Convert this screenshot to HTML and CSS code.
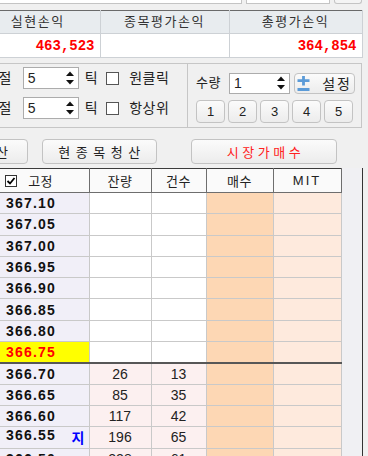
FILE: index.html
```html
<!DOCTYPE html>
<html lang="ko">
<head>
    <meta charset="UTF-8" />
    <title>주문</title>
    <link rel="stylesheet" href="styles.css">
</head>
<body>
    <div class="top-strip">
        <span class="top-box top-box-a"></span>
        <span class="top-box top-box-b"></span>
        <span class="top-box top-btn"></span>
    </div>

    <table class="pl">
        <colgroup><col class="pl-c1"><col class="pl-c2"><col class="pl-c3"></colgroup>
        <tr><th>실현손익</th><th>종목평가손익</th><th>총평가손익</th></tr>
        <tr><td>463,523</td><td></td><td>364,854</td></tr>
    </table>

    <div class="ctrl">
        <div class="ctrl-left">
            <div class="ctrl-row">
                <span class="lbl lbl-cut">익절</span>
                <div class="spin spin-tick">
                    <span>5</span>
                    <svg class="spin-arrows" width="8" height="18" viewBox="0 0 8 18"><polygon points="0,7 4,2.5 8,7" /><polygon points="0,11 8,11 4,15.5" /></svg>
                </div>
                <span class="lbl unit">틱</span>
                <span class="chk"></span>
                <span class="lbl">원클릭</span>
            </div>
            <div class="ctrl-row">
                <span class="lbl lbl-cut">손절</span>
                <div class="spin spin-tick">
                    <span>5</span>
                    <svg class="spin-arrows" width="8" height="18" viewBox="0 0 8 18"><polygon points="0,7 4,2.5 8,7" /><polygon points="0,11 8,11 4,15.5" /></svg>
                </div>
                <span class="lbl unit">틱</span>
                <span class="chk"></span>
                <span class="lbl">항상위</span>
            </div>
        </div>
        <div class="ctrl-right">
            <div class="ctrl-row">
                <span class="lbl lbl-qty">수량</span>
                <div class="spin spin-qty">
                    <span>1</span>
                    <svg class="spin-arrows" width="8" height="18" viewBox="0 0 8 18"><polygon points="0,7 4,2.5 8,7" /><polygon points="0,11 8,11 4,15.5" /></svg>
                </div>
                <button class="btn btn-set">
                    <svg width="13" height="17" viewBox="0 0 13 17"><path d="M6.5 1V10.5M0.5 5.7H12.5M0.5 14.5H12.5" stroke="#5b9bd8" stroke-width="2.8" fill="none" /></svg>
                    <span>설정</span>
                </button>
            </div>
            <div class="qty-btns">
                <button class="btn">1</button>
                <button class="btn">2</button>
                <button class="btn">3</button>
                <button class="btn">4</button>
                <button class="btn">5</button>
            </div>
        </div>
    </div>

    <div class="actions">
        <button class="btn act act-all">전체청산</button>
        <button class="btn act act-cur">현종목청산</button>
        <button class="btn act act-buy">시장가매수</button>
    </div>

    <div class="book">
        <table class="hoga">
            <colgroup>
                <col class="h-price"><col class="h-qty"><col class="h-cnt"><col class="h-buy"><col class="h-mit">
            </colgroup>
            <tr>
                <th class="fix">
                    <svg width="12" height="12" viewBox="0 0 12 12"><rect x="0.5" y="0.5" width="11" height="11" fill="#fff" stroke="#333" /><path d="M2.5 6L5 8.5L9.5 3" stroke="#000" stroke-width="1.8" fill="none" /></svg>
                    <span>고정</span>
                </th>
                <th>잔량</th><th>건수</th><th>매수</th><th class="mit">MIT</th>
            </tr>
            <tr class="ask"><td class="price">367.10</td><td></td><td></td><td class="buy"></td><td class="mitc"></td></tr>
            <tr class="ask"><td class="price">367.05</td><td></td><td></td><td class="buy"></td><td class="mitc"></td></tr>
            <tr class="ask"><td class="price">367.00</td><td></td><td></td><td class="buy"></td><td class="mitc"></td></tr>
            <tr class="ask"><td class="price">366.95</td><td></td><td></td><td class="buy"></td><td class="mitc"></td></tr>
            <tr class="ask"><td class="price">366.90</td><td></td><td></td><td class="buy"></td><td class="mitc"></td></tr>
            <tr class="ask"><td class="price">366.85</td><td></td><td></td><td class="buy"></td><td class="mitc"></td></tr>
            <tr class="ask"><td class="price">366.80</td><td></td><td></td><td class="buy"></td><td class="mitc"></td></tr>
            <tr class="ask"><td class="price now">366.75</td><td></td><td></td><td class="buy"></td><td class="mitc"></td></tr>
            <tr class="bid first"><td class="price">366.70</td><td>26</td><td>13</td><td class="buy"></td><td class="mitc"></td></tr>
            <tr class="bid"><td class="price">366.65</td><td>85</td><td>35</td><td class="buy"></td><td class="mitc"></td></tr>
            <tr class="bid"><td class="price">366.60</td><td>117</td><td>42</td><td class="buy"></td><td class="mitc"></td></tr>
            <tr class="bid"><td class="price">366.55<span class="ji">지</span></td><td>196</td><td>65</td><td class="buy"></td><td class="mitc"></td></tr>
            <tr class="bid"><td class="price">366.50</td><td>228</td><td>61</td><td class="buy"></td><td class="mitc"></td></tr>
        </table>
        <div class="book-side"></div>
    </div>
</body>
</html>
```

FILE: styles.css
```css
* {
    margin: 0;
    padding: 0;
    box-sizing: border-box;
}
body {
    width: 368px;
    height: 456px;
    overflow: hidden;
    background: #f0f0f0;
    color: #222;
    font-family: "Liberation Sans", "Noto Sans CJK KR", sans-serif;
    font-size: 13px;
}
button { font: inherit; color: inherit; }

/* top inputs (cut off) */
.top-strip { height: 10px; display: flex; gap: 4px; width: 362px; }
.top-box { height: 4px; background: #fff; border: 1px solid #c4c4c4; border-top: none; }
.top-box-a { width: 242px; border-left: none; }
.top-box-b { width: 84px; }
.top-btn { flex: 1; background: #f4f4f4; border-radius: 0 0 3px 3px; }

/* P&L */
.pl { margin-left: -24px; width: 386px; border-collapse: collapse; table-layout: fixed; background: #fff; border-top: 1px solid #6a6a6a; border-right: 1px solid #6a6a6a; border-bottom: 1px solid #a8a8a8; }
.pl-c1 { width: 124px; }
.pl-c2 { width: 129px; }
.pl-c3 { width: 133px; }
.pl th { height: 23px; background: #e8ecef; font-weight: normal; color: #333; letter-spacing: 1.5px; border: 1px solid #cdd1d5; border-top: none; line-height: 20px; }
.pl th:first-child, .pl td:first-child { border-left: none; }
.pl td { height: 24px; border: 1px solid #cdd1d5; text-align: right; padding-right: 5px; color: #ff0000; font: bold 14px "Liberation Mono", monospace; }

/* controls */
.ctrl { margin-top: 5px; width: 362px; height: 65px; display: flex; border: 1px solid #c6c6c6; border-left: none; }
.ctrl-left { width: 188px; border-right: 1px solid #c6c6c6; padding-top: 3px; display: flex; flex-direction: column; gap: 8px; overflow: hidden; }
.ctrl-right { flex: 1; padding: 8px 0 0 8px; display: flex; flex-direction: column; gap: 6px; }
.ctrl-row { display: flex; align-items: center; height: 22px; }
.lbl { font-size: 14px; line-height: 18px; white-space: nowrap; letter-spacing: 0.5px; }
.lbl-qty { font-size: 13px; }
.lbl-cut { margin-left: -15px; margin-right: 11px; }
.unit { margin: 0 8px 0 6px; }
.chk { width: 13px; height: 13px; background: #fff; border: 1px solid #555; margin-right: 10px; }
.spin { height: 22px; background: #fff; border: 1px solid #acacac; display: flex; align-items: center; justify-content: space-between; padding: 0 4px 0 4px; }
.spin span { font-size: 14px; }
.spin-tick { width: 56px; }
.spin-qty { width: 61px; margin-left: 8px; height: 21px; }
.spin-arrows { fill: #111; }

.btn { background: linear-gradient(#fbfbfb, #ececec); border: 1px solid #c3c3c3; border-radius: 4px; cursor: pointer; }
.btn-set { width: 61px; height: 21px; margin-left: 4px; display: flex; align-items: center; justify-content: space-between; padding: 0 2px 0 2px; }
.btn-set span { letter-spacing: 2px; font-size: 14px; }
.qty-btns { display: flex; gap: 3px; }
.qty-btns .btn { width: 29px; height: 23px; font-size: 13px; }

/* action buttons */
.actions { margin: 11px 0 0 -75px; display: flex; height: 25px; }
.act { height: 25px; letter-spacing: 5px; padding-left: 5px; }
.act-all { width: 103px; }
.act-cur { width: 115px; margin-left: 14px; letter-spacing: 5.5px; }
.act-buy { width: 146px; margin-left: 34px; color: #ff2020; letter-spacing: 3.5px; padding-left: 3px; }

/* order book */
.book { margin-top: 4px; display: flex; width: 368px; }
.hoga { width: 341px; border-collapse: collapse; table-layout: fixed; }
.h-price { width: 89px; }
.h-qty { width: 62px; }
.h-cnt { width: 55px; }
.h-buy { width: 67px; }
.h-mit { width: 68px; }
.hoga th { height: 24px; background: #fafafa; font-weight: normal; color: #222; letter-spacing: 0.5px; border: 1px solid #6e6e6e; border-top-color: #3c3c3c; border-left: none; }
.hoga th.fix { text-align: left; padding-left: 5px; }
.hoga th.fix svg { vertical-align: -1px; margin-right: 7px; }
.hoga th.mit { letter-spacing: 2px; }
.hoga tr { height: 21.3px; }
.hoga td { border: 1px solid #c9c9c9; text-align: center; background: #fff; padding: 0; font-size: 14px; }
.hoga td.price { text-align: left; padding-left: 6px; background: #f1eff8; font-weight: bold; font-size: 14px; letter-spacing: 1.2px; color: #111; border-left: none; }
.hoga td.now { background: #ffff00; color: #ff0000; }
.hoga .bid td { background: #fcf0f0; }
.hoga .bid td.price { background: #f1eff8; }
.hoga td.buy, .hoga .bid td.buy { background: #fdd7b4; }
.hoga td.mitc, .hoga .bid td.mitc { background: #feeadd; }
.hoga tr.first td { border-top: 2px solid #575757; }
.ji { float: right; margin-right: 4px; color: #0000ff; font-weight: bold; font-size: 14px; letter-spacing: 0; }
.book-side { width: 21px; background: #f0f0f3; border-right: 1px solid #333; }
```
